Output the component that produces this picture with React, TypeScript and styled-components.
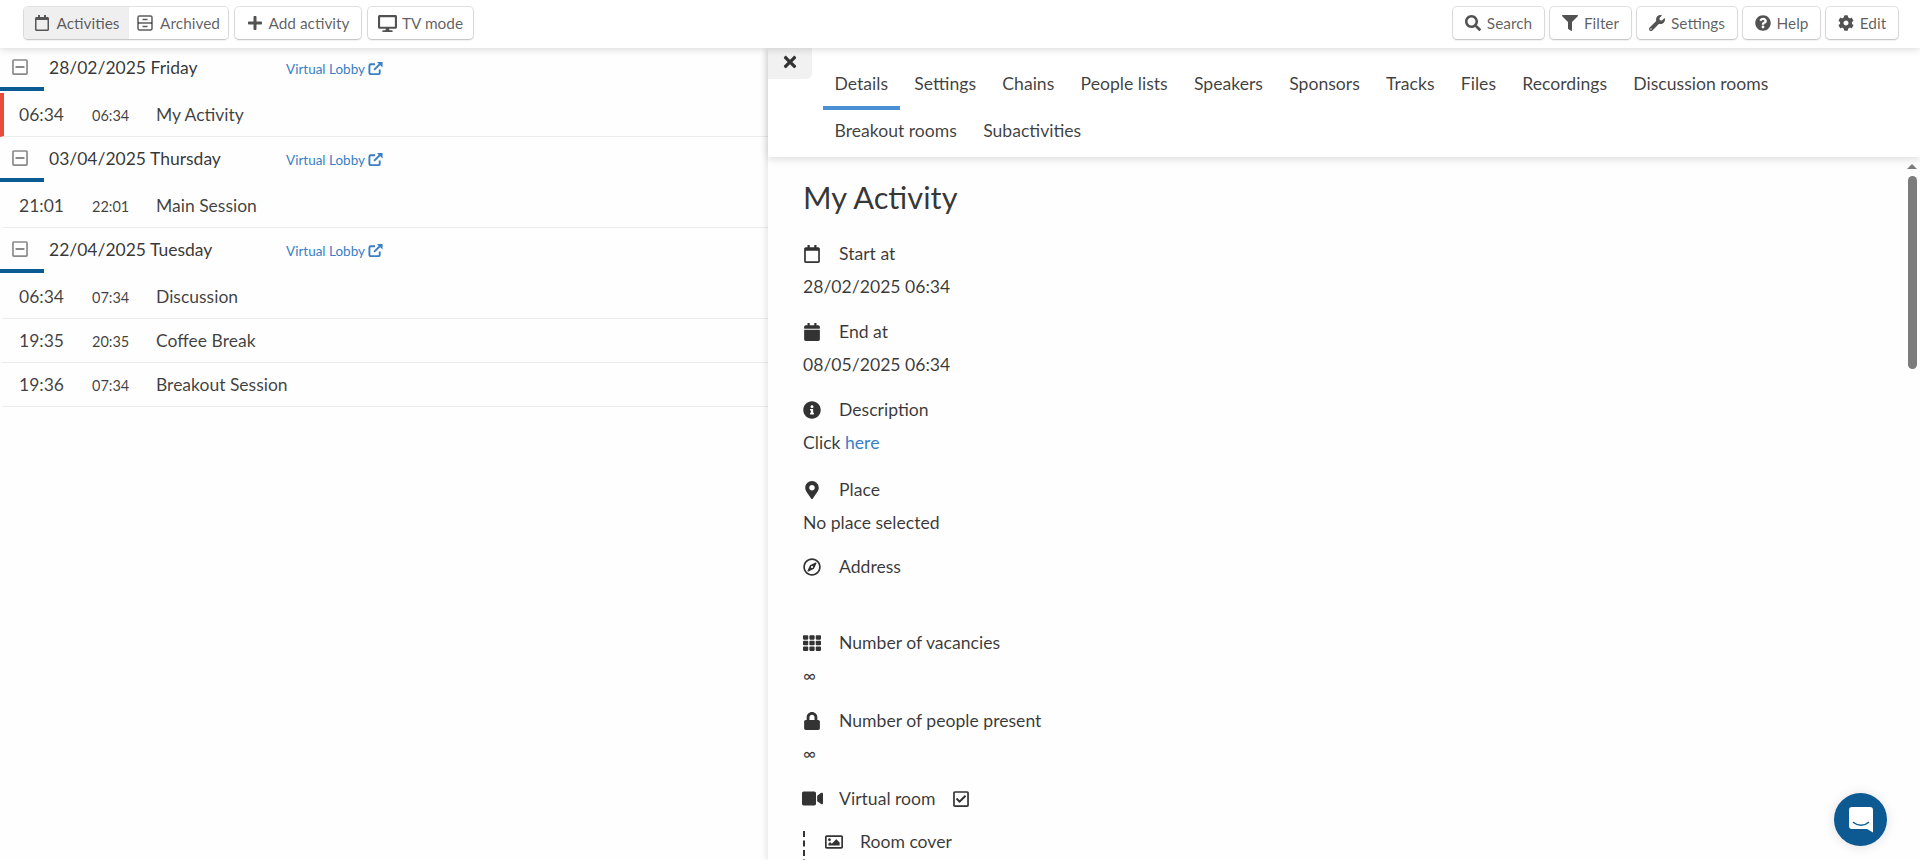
import { ReactNode } from "react";
import styled, { createGlobalStyle } from "styled-components";
import {
  FaRegCalendar,
  FaCalendar,
  FaPlus,
  FaDesktop,
  FaSearch,
  FaFilter,
  FaWrench,
  FaQuestionCircle,
  FaCog,
  FaTimes,
  FaInfoCircle,
  FaMapMarkerAlt,
  FaRegCompass,
  FaTh,
  FaLock,
  FaVideo,
  FaRegCheckSquare,
  FaRegImage,
  FaRegMinusSquare,
} from "react-icons/fa";

const GlobalStyle = createGlobalStyle`
  html, body {
    margin: 0;
    padding: 0;
    height: 100%;
    overflow: hidden;
    background: #fff;
    font-family: Lato, "Helvetica Neue", Arial, sans-serif;
    color: rgba(0, 0, 0, 0.87);
  }
  * {
    box-sizing: border-box;
  }
`;

const Page = styled.div`
  position: relative;
  height: 860px;
  display: flex;
  flex-direction: column;
  background: #fefefe;
`;

const Toolbar = styled.div`
  position: relative;
  z-index: 3;
  height: 48px;
  flex: none;
  display: flex;
  justify-content: space-between;
  padding: 7px 22px 0 24px;
  background: #fff;
  box-shadow: 0 1px 8px rgba(0, 0, 0, 0.16);
`;

const ButtonRow = styled.div`
  display: flex;
  gap: 6px;
  height: 32px;
`;

const LeftRow = styled(ButtonRow)`
  gap: 7px;
`;

const Button = styled.div<{ $w: number; $gap?: number }>`
  width: ${(p) => p.$w}px;
  height: 32px;
  display: flex;
  align-items: center;
  justify-content: center;
  gap: ${(p) => p.$gap ?? 6}px;
  font-size: 15.4px;
  color: rgba(0, 0, 0, 0.64);
  background: #fff;
  border-radius: 4px;
  box-shadow: 0 1px 2px rgba(34, 36, 38, 0.2), 0 0 0 1px rgba(34, 36, 38, 0.12);

  svg {
    font-size: 16px;
    color: rgba(0, 0, 0, 0.68);
  }
`;

const DesktopIcon = styled(FaDesktop)`
  && {
    font-size: 19px;
  }
`;

const ButtonGroup = styled.div`
  display: flex;
  height: 32px;
  border-radius: 4px;
  box-shadow: 0 1px 2px rgba(34, 36, 38, 0.2), 0 0 0 1px rgba(34, 36, 38, 0.12);
`;

const GroupItem = styled.div<{ $w: number; $active?: boolean }>`
  width: ${(p) => p.$w}px;
  display: flex;
  align-items: center;
  justify-content: center;
  gap: 7px;
  font-size: 15.4px;
  color: rgba(0, 0, 0, 0.64);
  background: ${(p) => (p.$active ? "#efefef" : "#fff")};
  border-radius: ${(p) => (p.$active ? "4px 0 0 4px" : "0 4px 4px 0")};

  svg {
    font-size: 16px;
  }
`;

const Body = styled.div`
  flex: 1;
  min-height: 0;
  display: flex;
`;

const ListPanel = styled.div`
  width: 768px;
  flex: none;
  margin-top: -2px;
`;

const DayHeader = styled.div`
  position: relative;
  height: 45px;
  margin-bottom: 2px;
  display: flex;
  align-items: center;
  padding: 0 0 3px 12px;
  font-size: 17.5px;
  color: rgba(0, 0, 0, 0.8);

  &::after {
    content: "";
    position: absolute;
    left: 0;
    bottom: 0;
    width: 44px;
    height: 4px;
    background: #0a5a93;
  }
`;

const DayToggle = styled.span`
  width: 16px;
  display: flex;
  color: #8a8a8a;
  font-size: 18px;
`;

const DayTitle = styled.span`
  width: 237px;
  margin-left: 21px;
`;

const LobbyLink = styled.a`
  display: flex;
  align-items: center;
  gap: 3px;
  margin-top: 3px;
  font-size: 13.5px;
  color: #3a7fc4;
`;

const ActivityRow = styled.div<{ $current?: boolean }>`
  height: 44px;
  margin-left: ${(p) => (p.$current ? 0 : 2)}px;
  display: flex;
  align-items: center;
  padding-left: ${(p) => (p.$current ? 15 : 17)}px;
  color: rgba(0, 0, 0, 0.76);
  border-bottom: 1px solid #ececec;
  border-left: ${(p) => (p.$current ? "4px solid #e74c3c" : "none")};
`;

const StartTime = styled.span`
  width: 73px;
  font-size: 17.5px;
`;

const EndTime = styled.span`
  width: 64px;
  font-size: 14.5px;
  padding-top: 2px;
`;

const ActivityName = styled.span`
  font-size: 17.5px;
`;

const DetailPanel = styled.div`
  position: relative;
  flex: 1;
  min-width: 0;
  display: flex;
  flex-direction: column;
  box-shadow: -2px 0 6px rgba(0, 0, 0, 0.1);
`;

const CloseTab = styled.div`
  position: absolute;
  top: 0;
  left: 0;
  width: 44px;
  height: 31px;
  display: flex;
  align-items: center;
  justify-content: center;
  padding-bottom: 3px;
  background: #f1f1f1;
  border-bottom-right-radius: 6px;
  font-size: 18px;
  color: #333;
`;

const TabBar = styled.div`
  position: relative;
  z-index: 2;
  height: 109px;
  flex: none;
  display: flex;
  flex-wrap: wrap;
  align-content: flex-start;
  padding: 15px 40px 0 55px;
  background: #fff;
  box-shadow: 0 2px 8px rgba(0, 0, 0, 0.14);
`;

const Tab = styled.div<{ $active?: boolean }>`
  height: 47px;
  padding: 0 11.5px;
  margin-right: 3.3px;
  font-size: 17.6px;
  line-height: 41px;
  color: rgba(0, 0, 0, 0.76);
  border-bottom: 4px solid ${(p) => (p.$active ? "#4a90d2" : "transparent")};
`;

const Scroller = styled.div`
  position: relative;
  flex: 1;
  min-height: 0;
  overflow: hidden;
`;

const ScrollArrow = styled.div`
  position: absolute;
  top: 7px;
  right: 3px;
  width: 0;
  height: 0;
  border-left: 5px solid transparent;
  border-right: 5px solid transparent;
  border-bottom: 5px solid #7c7c7c;
`;

const ScrollThumb = styled.div`
  position: absolute;
  top: 19px;
  right: 3px;
  width: 9px;
  height: 193px;
  border-radius: 5px;
  background: #7c7c7c;
`;

const DetailContent = styled.div`
  padding: 21px 0 0 35px;
  color: rgba(0, 0, 0, 0.78);
`;

const Heading = styled.h2`
  margin: 0 0 22px;
  font-size: 30.8px;
  font-weight: 400;
  line-height: 40px;
  color: rgba(0, 0, 0, 0.8);
`;

const Field = styled.div<{ $gap: number }>`
  margin-bottom: ${(p) => p.$gap}px;
`;

const FieldLabel = styled.div`
  height: 27px;
  display: flex;
  align-items: center;
  font-size: 17.6px;
`;

const FieldIcon = styled.span`
  width: 36px;
  flex: none;
  display: flex;
  font-size: 18px;
  color: #333;
`;

const VideoIcon = styled(FaVideo)`
  font-size: 21px;
  margin-left: -1px;
`;

const FieldValue = styled.div`
  min-height: 27px;
  margin-top: 6px;
  font-size: 17.6px;
  line-height: 27px;
`;

const Link = styled.a`
  color: #3a7fc4;
`;

const CheckMark = styled.span`
  display: flex;
  margin-left: 16px;
  font-size: 18px;
  color: #333;
`;

const SubField = styled.div`
  height: 44px;
  border-left: 2px dashed #333;
  padding: 0 0 0 20px;
  display: flex;
  align-items: flex-start;
  font-size: 17.6px;
`;

const SubIcon = styled.span`
  width: 35px;
  height: 27px;
  margin-top: -3px;
  display: flex;
  align-items: center;
  font-size: 18px;
  color: #333;
`;

const SubLabel = styled.span`
  margin-top: -3px;
  line-height: 27px;
`;

const ChatBubble = styled.div`
  position: absolute;
  right: 33px;
  bottom: 14px;
  z-index: 5;
  width: 53px;
  height: 53px;
  display: flex;
  align-items: center;
  justify-content: center;
  border-radius: 50%;
  background: #0d5a92;
  box-shadow: 0 1px 12px rgba(0, 0, 0, 0.12);
`;

function ArchiveIcon() {
  return (
    <svg width="16" height="16" viewBox="0 0 16 16" fill="none" stroke="currentColor" strokeWidth="1.5">
      <rect x="1" y="1" width="14" height="14" rx="1.5" />
      <path d="M1 8h14M5.5 4.5h5M5.5 11.5h5" />
    </svg>
  );
}

function OpenLinkIcon() {
  return (
    <svg width="15" height="15" viewBox="0 0 16 16">
      <path
        d="M12.5 9v3.5a1.5 1.5 0 0 1-1.5 1.5H3a1.5 1.5 0 0 1-1.5-1.5V5A1.5 1.5 0 0 1 3 3.5h4.5"
        fill="none"
        stroke="currentColor"
        strokeWidth="2"
      />
      <path d="M6.5 9.5l6-6" fill="none" stroke="currentColor" strokeWidth="2" />
      <path d="M9.5 1h6v6z" fill="currentColor" />
    </svg>
  );
}

function ChatIcon() {
  return (
    <svg width="24" height="26" viewBox="0 0 24 26">
      <path
        fill="#fff"
        d="M3 0h18a3 3 0 0 1 3 3v22.5l-6-3.5H3a3 3 0 0 1-3-3V3a3 3 0 0 1 3-3z"
      />
      <path d="M4.5 15.5c4.5 3.6 10.5 3.6 15 0" fill="none" stroke="#0d5a92" strokeWidth="1.6" strokeLinecap="round" />
    </svg>
  );
}

type Activity = { start: string; end: string; name: string; current?: boolean };

const days: { title: string; activities: Activity[] }[] = [
  { title: "28/02/2025 Friday", activities: [{ start: "06:34", end: "06:34", name: "My Activity", current: true }] },
  { title: "03/04/2025 Thursday", activities: [{ start: "21:01", end: "22:01", name: "Main Session" }] },
  {
    title: "22/04/2025 Tuesday",
    activities: [
      { start: "06:34", end: "07:34", name: "Discussion" },
      { start: "19:35", end: "20:35", name: "Coffee Break" },
      { start: "19:36", end: "07:34", name: "Breakout Session" },
    ],
  },
];

const tabs = [
  "Details",
  "Settings",
  "Chains",
  "People lists",
  "Speakers",
  "Sponsors",
  "Tracks",
  "Files",
  "Recordings",
  "Discussion rooms",
  "Breakout rooms",
  "Subactivities",
];

const rightButtons: { label: string; icon: ReactNode; w: number }[] = [
  { label: "Search", icon: <FaSearch />, w: 91 },
  { label: "Filter", icon: <FaFilter />, w: 81 },
  { label: "Settings", icon: <FaWrench />, w: 100 },
  { label: "Help", icon: <FaQuestionCircle />, w: 77 },
  { label: "Edit", icon: <FaCog />, w: 72 },
];

const fields: { label: string; icon: ReactNode; value: ReactNode; gap: number }[] = [
  { label: "Start at", icon: <FaRegCalendar />, value: "28/02/2025 06:34", gap: 18 },
  { label: "End at", icon: <FaCalendar />, value: "08/05/2025 06:34", gap: 18 },
  {
    label: "Description",
    icon: <FaInfoCircle />,
    value: (
      <>
        Click <Link>here</Link>
      </>
    ),
    gap: 20,
  },
  { label: "Place", icon: <FaMapMarkerAlt />, value: "No place selected", gap: 17 },
  { label: "Address", icon: <FaRegCompass />, value: "", gap: 16 },
  { label: "Number of vacancies", icon: <FaTh />, value: "∞", gap: 18 },
  { label: "Number of people present", icon: <FaLock />, value: "∞", gap: 18 },
];

export default function App() {
  return (
    <Page>
      <GlobalStyle />
      <Toolbar>
        <LeftRow>
          <ButtonGroup>
            <GroupItem $w={105} $active>
              <FaRegCalendar />
              Activities
            </GroupItem>
            <GroupItem $w={99}>
              <ArchiveIcon />
              Archived
            </GroupItem>
          </ButtonGroup>
          <Button $w={126}>
            <FaPlus />
            Add activity
          </Button>
          <Button $w={105} $gap={5}>
            <DesktopIcon />
            TV mode
          </Button>
        </LeftRow>
        <ButtonRow>
          {rightButtons.map((b) => (
            <Button key={b.label} $w={b.w}>
              {b.icon}
              {b.label}
            </Button>
          ))}
        </ButtonRow>
      </Toolbar>
      <Body>
        <ListPanel>
          {days.map((day) => (
            <div key={day.title}>
              <DayHeader>
                <DayToggle>
                  <FaRegMinusSquare />
                </DayToggle>
                <DayTitle>{day.title}</DayTitle>
                <LobbyLink>
                  Virtual Lobby
                  <OpenLinkIcon />
                </LobbyLink>
              </DayHeader>
              {day.activities.map((a) => (
                <ActivityRow key={a.name} $current={a.current}>
                  <StartTime>{a.start}</StartTime>
                  <EndTime>{a.end}</EndTime>
                  <ActivityName>{a.name}</ActivityName>
                </ActivityRow>
              ))}
            </div>
          ))}
        </ListPanel>
        <DetailPanel>
          <TabBar>
            <CloseTab>
              <FaTimes />
            </CloseTab>
            {tabs.map((t, i) => (
              <Tab key={t} $active={i === 0}>
                {t}
              </Tab>
            ))}
          </TabBar>
          <Scroller>
            <DetailContent>
              <Heading>My Activity</Heading>
              {fields.map((f) => (
                <Field key={f.label} $gap={f.gap}>
                  <FieldLabel>
                    <FieldIcon>{f.icon}</FieldIcon>
                    {f.label}
                  </FieldLabel>
                  <FieldValue>{f.value}</FieldValue>
                </Field>
              ))}
              <Field $gap={19}>
                <FieldLabel>
                  <FieldIcon>
                    <VideoIcon />
                  </FieldIcon>
                  Virtual room
                  <CheckMark>
                    <FaRegCheckSquare />
                  </CheckMark>
                </FieldLabel>
              </Field>
              <SubField>
                <SubIcon>
                  <FaRegImage />
                </SubIcon>
                <SubLabel>Room cover</SubLabel>
              </SubField>
            </DetailContent>
            <ScrollArrow />
            <ScrollThumb />
          </Scroller>
        </DetailPanel>
      </Body>
      <ChatBubble>
        <ChatIcon />
      </ChatBubble>
    </Page>
  );
}
